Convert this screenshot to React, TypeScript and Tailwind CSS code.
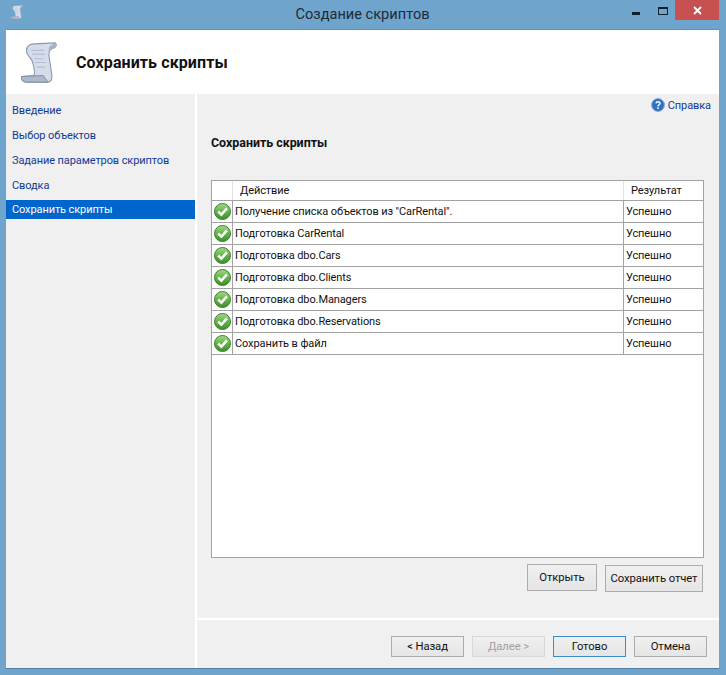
import React from "react";

const navItems = ["Введение", "Выбор объектов", "Задание параметров скриптов", "Сводка", "Сохранить скрипты"];

const rows = [
  "Получение списка объектов из \"CarRental\".",
  "Подготовка CarRental",
  "Подготовка dbo.Cars",
  "Подготовка dbo.Clients",
  "Подготовка dbo.Managers",
  "Подготовка dbo.Reservations",
  "Сохранить в файл",
];

function ScrollIcon({ size }: { size: number }) {
  return (
    <svg width={size} height={size} viewBox="0 0 40 44" className="block">
      <path d="M6 10 C6 4 10 2 14 2 L37 1 C39 3 38 6 34 7 C31 8 30 10 30 14 L33 34 C34 39 33 43 29 43 L6 43 C2 43 0 40 1 37 L14 36 C16 32 14 26 12 20 C10 16 6 14 6 10 Z" fill="#d5dcea" stroke="#8d99ad" strokeWidth="1.2" />
      <path d="M1 37 L24 36 C26 38 27 41 29 43 L6 43 C2 43 0 40 1 37 Z" fill="#aeb9cc" stroke="#7f8ca3" strokeWidth="1" />
      <path d="M30 6 C32 3 35 2 37 1 C39 3 38 6 34 7 C32 8 31 9 30 11 Z" fill="#a6b2c7" />
      <path d="M11 9 H25 M12 13 H26 M14 18 H24 M15 22 H27 M17 27 H26" stroke="#b5bfd1" strokeWidth="1.2" fill="none" />
    </svg>
  );
}

function CheckIcon() {
  return (
    <svg width="17" height="17" viewBox="0 0 17 17" className="block">
      <defs>
        <linearGradient id="okFill" x1="0" y1="0" x2="0" y2="1">
          <stop offset="0" stopColor="#a5d88b" />
          <stop offset="0.55" stopColor="#5fae45" />
          <stop offset="1" stopColor="#3f8f2d" />
        </linearGradient>
      </defs>
      <circle cx="8.5" cy="8.5" r="8" fill="url(#okFill)" stroke="#3c7f2b" />
      <path d="M4.2 8.5 L7.4 11.7 L12.9 5.3" fill="none" stroke="#f4f8f0" strokeWidth="2.6" />
    </svg>
  );
}

function HelpIcon() {
  return (
    <svg width="14" height="14" viewBox="0 0 14 14" className="block">
      <circle cx="7" cy="7" r="6.4" fill="#2f6fc4" stroke="#8aa7cf" />
      <path d="M5 5.3 C5.2 3.4 9 3.3 9 5.3 C9 6.8 7 6.7 7 8.4" fill="none" stroke="#fff" strokeWidth="1.5" />
      <rect x="6.2" y="9.4" width="1.6" height="1.6" fill="#fff" />
    </svg>
  );
}

function Btn({ label, className, disabled }: { label: string; className: string; disabled?: boolean }) {
  return (
    <button
      className={`flex items-center justify-center border bg-gradient-to-b from-[#f0f0f0] to-[#e5e5e5] pt-[2px] text-[11.3px] ${
        disabled ? "border-[#d9d9d9] text-[#a0a0a0]" : "border-[#acacac] text-[#111]"
      } ${className}`}
    >
      {label}
    </button>
  );
}

export default function App() {
  return (
    <div className="flex h-[675px] w-[726px] flex-col overflow-hidden bg-[#6fa5cc] pb-[7px] pl-[6px] pr-[7px] font-['Roboto','Open_Sans',sans-serif] text-[11px] tracking-[-0.1px]">
      {/* title bar */}
      <div className="flex h-[29px] shrink-0 items-start">
        <div className="mt-[5px] ml-[4px] w-[14px]">
          <ScrollIcon size={14} />
        </div>
        <div className="mt-[4px] flex-1 pl-[69px] text-center text-[14.6px] leading-[20px] tracking-normal text-[#1e2a36]">Создание скриптов</div>
        <div className="mt-[12px] mr-[18px] h-[3px] w-[8px] bg-[#10202e]" />
        <div className="mt-[7px] mr-[7px] h-[8px] w-[10px] border border-t-[2px] border-[#10202e]" />
        <div className="flex h-[20px] w-[44px] items-center justify-center bg-[#c75050]">
          <svg width="9" height="9" viewBox="0 0 9 9">
            <path d="M1 1 L8 8 M8 1 L1 8" stroke="#fff" strokeWidth="1.8" />
          </svg>
        </div>
      </div>

      <div className="flex min-h-0 flex-1 flex-col border-t border-[#5f8fb3] bg-white shadow-[0_1px_0_#4f7fa5]">
        {/* header */}
        <div className="flex h-[64px] shrink-0 items-center pl-[13px]">
          <ScrollIcon size={41} />
          <div className="ml-[16px] mt-[2px] text-[16px] font-bold leading-[20px] tracking-[0.1px] text-[#111]">Сохранить скрипты</div>
        </div>

        <div className="flex min-h-0 flex-1">
          {/* wizard steps */}
          <div className="w-[189px] shrink-0 bg-[#f0f0f0] pt-[5px]">
            {navItems.map((item, i) =>
              i === 4 ? (
                <div key={item} className="mt-[1px] flex h-[19px] items-center bg-[#0066cc] pl-[6px] pt-[2px] text-white">
                  {item}
                </div>
              ) : (
                <div key={item} className="flex h-[25px] items-center pl-[6px] text-[#0f3a96]">
                  {item}
                </div>
              )
            )}
          </div>

          {/* main */}
          <div className="ml-[2px] flex min-w-0 flex-1 flex-col bg-[#f0f0f0]">
            <div className="flex h-[20px] items-center justify-end gap-[3px] pr-[8px] pt-[2px] leading-[16px] text-[#0f3a96]">
              <HelpIcon />
              <span className="pt-[1px]">Справка</span>
            </div>
            <div className="ml-[14px] mt-[21px] text-[12.4px] font-bold leading-[16px] tracking-normal text-[#111]">Сохранить скрипты</div>

            <div className="ml-[14px] mr-[15px] mt-[29px] flex h-[378px] flex-col border border-[#a3a3a3] bg-white text-[#111]">
              <div className="flex h-[20px] shrink-0 items-center border-b border-[#a3a3a3]">
                <div className="h-full w-[21px] shrink-0 border-r border-[#e3e3e3]" />
                <div className="flex-1 pl-[7px] pt-[1px]">Действие</div>
                <div className="h-full w-[80px] shrink-0 border-l border-[#e3e3e3] pl-[7px] leading-[20px]">Результат</div>
              </div>
              {rows.map((row) => (
                <div key={row} className="flex h-[22px] shrink-0 items-center border-b border-[#a3a3a3]">
                  <div className="flex h-full w-[21px] shrink-0 items-center justify-center border-r border-[#a3a3a3] pb-[1px]">
                    <CheckIcon />
                  </div>
                  <div className="flex-1 truncate pl-[2px] pt-[1px]">{row}</div>
                  <div className="flex h-full w-[80px] shrink-0 items-center border-l border-[#a3a3a3] pl-[2px] pt-[1px]">Успешно</div>
                </div>
              ))}
            </div>

            <div className="mt-[6px] mr-[16px] flex items-start justify-end gap-[8px]">
              <Btn label="Открыть" className="h-[27px] w-[70px]" />
              <Btn label="Сохранить отчет" className="mt-[1px] h-[27px] w-[98px]" />
            </div>

            <div className="mt-[26px] h-[2px] bg-white" />

            <div className="mt-[16px] flex justify-end gap-[8px] pr-[12px]">
              <Btn label="< Назад" className="h-[21px] w-[73px]" />
              <Btn label="Далее >" disabled className="h-[21px] w-[73px]" />
              <Btn label="Готово" className="h-[21px] w-[73px] !border-[#3c8ccb]" />
              <Btn label="Отмена" className="h-[21px] w-[73px]" />
            </div>
          </div>
        </div>
      </div>
    </div>
  );
}
